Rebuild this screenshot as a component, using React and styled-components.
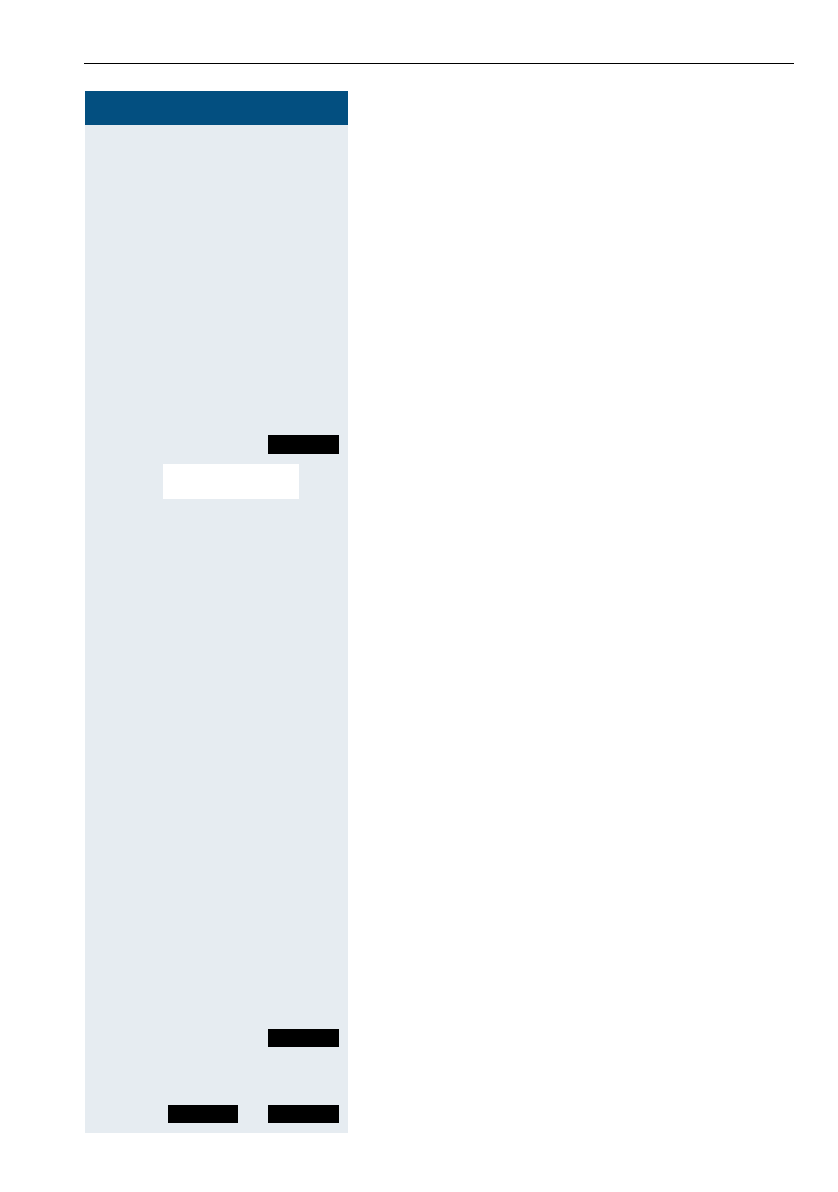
import React from "react";
import styled, { createGlobalStyle } from "styled-components";

const GlobalStyle = createGlobalStyle`
  html, body {
    margin: 0;
    padding: 0;
    background: #ffffff;
    font-family: "Liberation Sans", Arial, sans-serif;
  }
`;

const Page = styled.div`
  width: 838px;
  height: 1192px;
  padding-top: 63px;
  box-sizing: border-box;
  background: #ffffff;
`;

const Rule = styled.div`
  margin-left: 84px;
  width: 710px;
  height: 1px;
  background: #000000;
`;

const Sidebar = styled.aside`
  margin-top: 27px;
  margin-left: 85px;
  width: 263px;
  display: flex;
  flex-direction: column;
`;

const Header = styled.div`
  height: 34px;
  background: #034f80;
`;

const Panel = styled.div`
  height: 1008px;
  box-sizing: border-box;
  padding-top: 310px;
  background: #e6ecf1;
  display: flex;
  flex-direction: column;
`;

const KeyRow = styled.div`
  display: flex;
  justify-content: flex-end;
  gap: 30px;
  padding-right: 9px;
  margin-top: ${(props) => props.offset || 0}px;
`;

const SoftKey = styled.div`
  width: ${(props) => props.width || 71}px;
  height: ${(props) => props.height || 18}px;
  background: #000000;
`;

const Field = styled.div`
  margin-top: 10px;
  margin-left: 78px;
  width: 136px;
  height: 35px;
  background: #ffffff;
`;

export default function App() {
  return (
    <>
      <GlobalStyle />
      <Page>
        <Rule />
        <Sidebar>
          <Header />
          <Panel>
            <KeyRow>
              <SoftKey height={19} />
            </KeyRow>
            <Field />
            <KeyRow offset={530}>
              <SoftKey />
            </KeyRow>
            <KeyRow offset={58}>
              <SoftKey width={70} />
              <SoftKey />
            </KeyRow>
          </Panel>
        </Sidebar>
      </Page>
    </>
  );
}
